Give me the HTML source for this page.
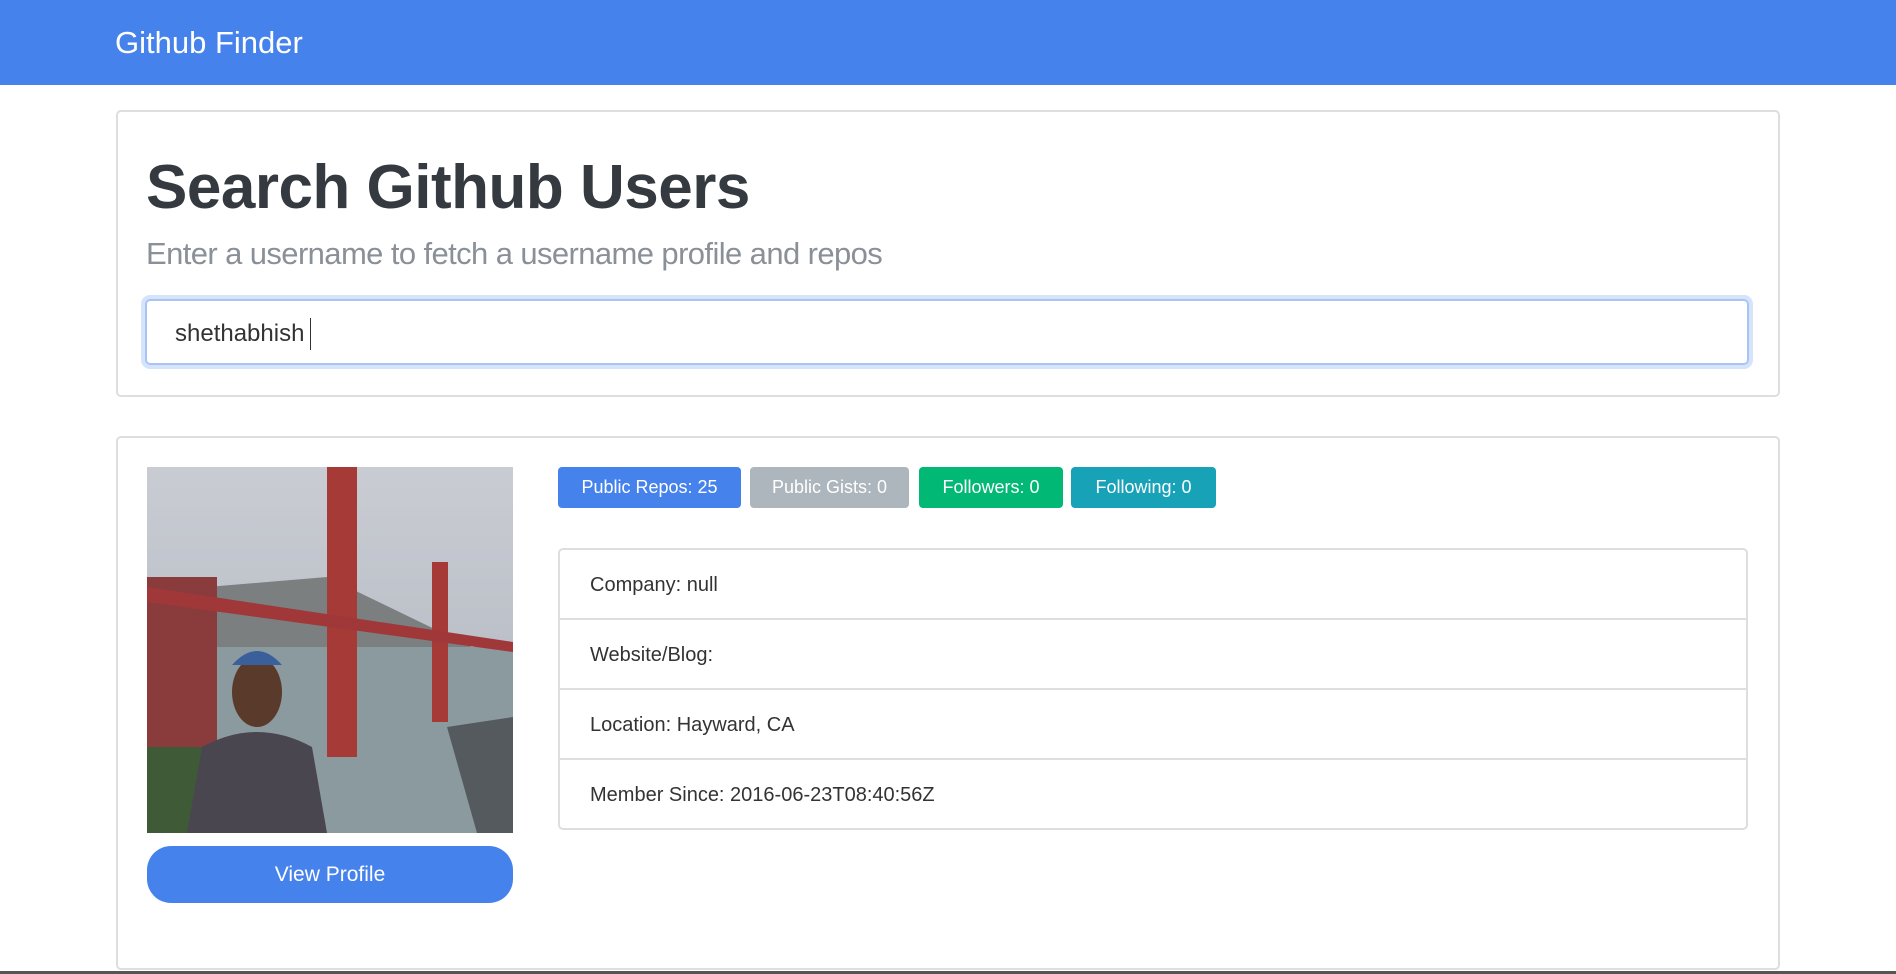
<!DOCTYPE html>
<html><head><meta charset="utf-8"><style>
*{box-sizing:border-box;margin:0;padding:0}
body{width:1896px;height:974px;overflow:hidden;background:#fff;font-family:"Liberation Sans",sans-serif;color:#343a40;position:relative}
.nav{position:absolute;left:0;top:0;width:1896px;height:85px;background:#4582ec}
.nav span{position:absolute;left:115px;top:25px;color:#fff;font-size:31px}
.card{position:absolute;border:2px solid #dedede;border-radius:5px;background:#fff}
h1{position:absolute;left:146px;top:152px;font-size:62px;font-weight:bold;color:#343a40;letter-spacing:-0.5px}
.lead{position:absolute;left:146px;top:236px;font-size:31px;color:#8a9097;font-weight:300;letter-spacing:-0.6px}
.inp{position:absolute;left:145px;top:299px;width:1604px;height:66px;border:2px solid #a8c4f5;border-radius:5px;box-shadow:0 0 0 4px #d6e4fb}
.inp span{position:absolute;left:28px;top:19px;font-size:24px;color:#333}
.inp i{position:absolute;left:163px;top:17px;width:1px;height:32px;background:#333}
.badge{position:absolute;top:467px;height:41px;border-radius:4px;color:#fff;font-size:18px;text-align:center;line-height:41px}
.list{position:absolute;left:558px;top:548px;width:1190px;height:282px;border:2px solid #dedede;border-radius:5px}
.li{height:70px;border-bottom:2px solid #dedede;padding-left:30px;line-height:70px;font-size:20px;color:#333}
.li:last-child{border-bottom:none}
.btn{position:absolute;left:147px;top:846px;width:366px;height:57px;border-radius:24px;background:#4582ec;color:#fff;font-size:21px;text-align:center;line-height:57px}
</style></head><body>
<div class="nav"><span>Github Finder</span></div>
<div class="card" style="left:116px;top:110px;width:1664px;height:287px"></div>
<h1>Search Github Users</h1>
<div class="lead">Enter a username to fetch a username profile and repos</div>
<div class="inp"><span>shethabhish</span><i></i></div>
<div class="card" style="left:116px;top:436px;width:1664px;height:534px"></div>
<svg style="position:absolute;left:147px;top:467px" width="366" height="366" viewBox="0 0 366 366">
<defs><linearGradient id="s" x1="0" y1="0" x2="0" y2="1"><stop offset="0" stop-color="#c9ccd3"/><stop offset="1" stop-color="#aeb4bd"/></linearGradient></defs>
<rect width="366" height="366" fill="url(#s)"/>
<path d="M60 120 L180 110 L366 200 L366 260 L60 260Z" fill="#7b7f80"/>
<rect y="180" width="366" height="186" fill="#8b9a9f"/>
<rect x="0" y="110" width="70" height="256" fill="#8a3b3b"/>
<rect x="0" y="280" width="60" height="86" fill="#3f5a36"/>
<rect x="180" y="0" width="30" height="290" fill="#a53a36"/>
<rect x="285" y="95" width="16" height="160" fill="#a53a36"/>
<path d="M0 120 L366 175 L366 185 L0 135Z" fill="#a0383a"/>
<path d="M40 366 L55 280 Q110 250 165 280 L180 366Z" fill="#4a4650"/>
<ellipse cx="110" cy="225" rx="25" ry="35" fill="#5a3a2a"/>
<path d="M85 198 Q110 170 135 198Z" fill="#3a5f9a"/>
<path d="M300 260 L366 250 L366 366 L330 366Z" fill="#555a5e"/>
</svg>
<div class="btn">View Profile</div>
<div class="badge" style="left:558px;width:183px;background:#4582ec">Public Repos: 25</div>
<div class="badge" style="left:750px;width:159px;background:#adb5bd">Public Gists: 0</div>
<div class="badge" style="left:919px;width:144px;background:#02b875">Followers: 0</div>
<div class="badge" style="left:1071px;width:145px;background:#17a2b8">Following: 0</div>
<div class="list">
<div class="li">Company: null</div>
<div class="li">Website/Blog:</div>
<div class="li">Location: Hayward, CA</div>
<div class="li">Member Since: 2016-06-23T08:40:56Z</div>
</div>
<div style="position:absolute;left:0;top:971px;width:1896px;height:3px;background:#555"></div>
</body></html>
